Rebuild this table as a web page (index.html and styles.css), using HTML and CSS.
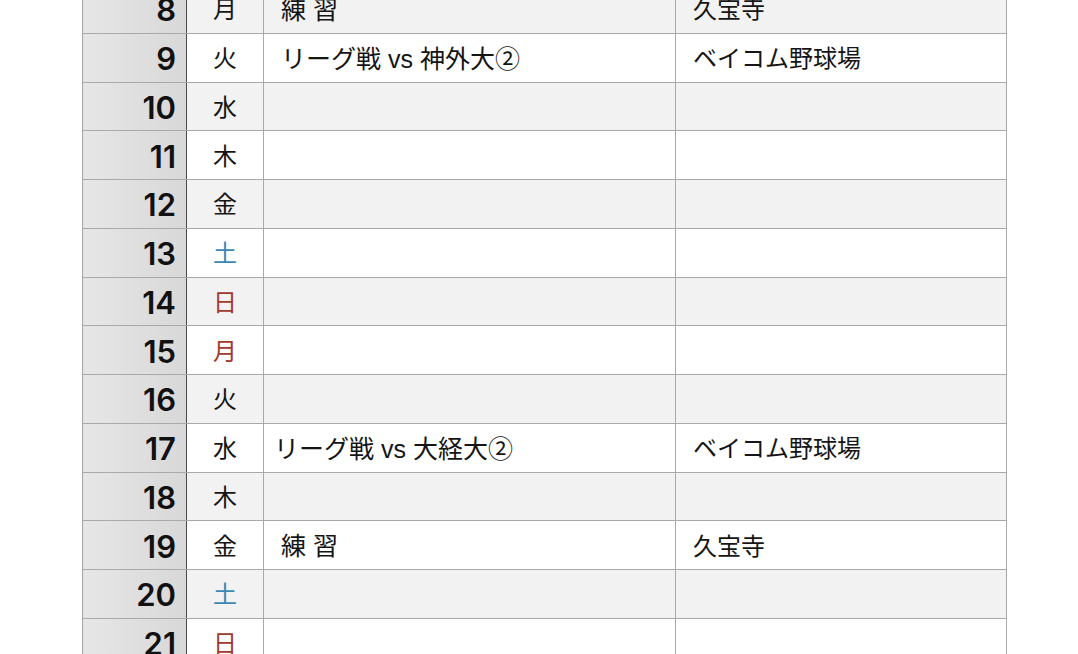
FILE: index.html
```html
<!DOCTYPE html>
<html lang="ja">
<head>
<meta charset="utf-8">
<link rel="stylesheet" href="styles.css">
</head>
<body>
<div class="page">
<table class="schedule">
<colgroup><col class="c-num"><col class="c-day"><col class="c-event"><col class="c-place"></colgroup>
<tbody>
<tr class="alt"><td class="num">8</td><td class="day">月</td><td class="event">練 習</td><td class="place">久宝寺</td></tr>
<tr><td class="num">9</td><td class="day">火</td><td class="event">リーグ戦 vs 神外大②</td><td class="place">ベイコム野球場</td></tr>
<tr class="alt"><td class="num">10</td><td class="day">水</td><td class="event"></td><td class="place"></td></tr>
<tr><td class="num">11</td><td class="day">木</td><td class="event"></td><td class="place"></td></tr>
<tr class="alt"><td class="num">12</td><td class="day">金</td><td class="event"></td><td class="place"></td></tr>
<tr><td class="num">13</td><td class="day sat">土</td><td class="event"></td><td class="place"></td></tr>
<tr class="alt"><td class="num">14</td><td class="day sun">日</td><td class="event"></td><td class="place"></td></tr>
<tr><td class="num">15</td><td class="day sun">月</td><td class="event"></td><td class="place"></td></tr>
<tr class="alt"><td class="num">16</td><td class="day">火</td><td class="event"></td><td class="place"></td></tr>
<tr><td class="num">17</td><td class="day">水</td><td class="event tight">リーグ戦 vs 大経大②</td><td class="place">ベイコム野球場</td></tr>
<tr class="alt"><td class="num">18</td><td class="day">木</td><td class="event"></td><td class="place"></td></tr>
<tr><td class="num">19</td><td class="day">金</td><td class="event">練 習</td><td class="place">久宝寺</td></tr>
<tr class="alt"><td class="num">20</td><td class="day sat">土</td><td class="event"></td><td class="place"></td></tr>
<tr><td class="num">21</td><td class="day sun">日</td><td class="event"></td><td class="place"></td></tr>
</tbody>
</table>
</div>
</body>
</html>
```

FILE: styles.css
```css
html, body {
  margin: 0;
  padding: 0;
  background: #ffffff;
}
.page {
  padding-left: 82px;
  overflow: hidden;
  height: 654px;
}
.schedule {
  margin-top: -16px;
  border-collapse: collapse;
  table-layout: fixed;
  width: 924px;
  font-family: "Liberation Sans", "Noto Sans CJK JP", sans-serif;
  color: #151515;
}
.c-num { width: 104px; }
.c-day { width: 77px; }
.c-event { width: 412px; }
.c-place { width: 331px; }
.schedule tr { height: 48.75px; background: #ffffff; }
.schedule tr.alt { background: #f2f2f2; }
.schedule td {
  border: 1px solid #a9a9a9;
  padding: 0 0 2px 0;
  font-size: 24px;
  vertical-align: middle;
  white-space: nowrap;
}
.schedule td.num {
  background: linear-gradient(to right, #e6e6e6, #d8d8d8);
  border-right: 1px solid #4a4a4a;
  text-align: right;
  padding: 2px 10px 0 0;
  font-family: "Inter", sans-serif;
  font-weight: 600;
  font-size: 31px;
  line-height: 1;
  color: #111;
}
.schedule td.day { text-align: center; }
.schedule td.sat { color: #3b88b4; }
.schedule td.sun { color: #a23a2c; }
.schedule td.event { padding-left: 17px; font-size: 25px; }
.schedule td.event.tight { padding-left: 10px; }
.schedule td.place { padding-left: 17px; }
```
